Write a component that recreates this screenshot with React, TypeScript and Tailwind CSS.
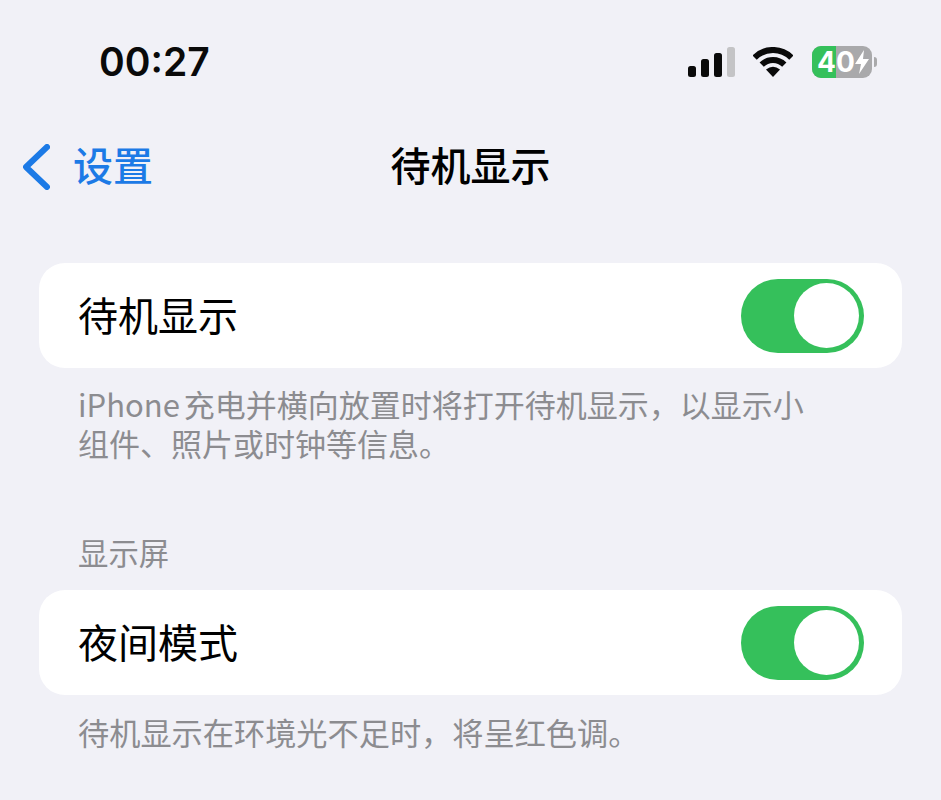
const cjk = { fontFamily: '"Noto Sans CJK SC", "Liberation Sans", sans-serif' };

function Toggle() {
  return (
    <div className="flex h-[74px] w-[123px] items-center justify-end rounded-full bg-[#35c05b] pr-[5px]">
      <div className="h-[65px] w-[65px] rounded-full bg-white" />
    </div>
  );
}

function Row({ label }: { label: string }) {
  return (
    <div className="mx-[39px] flex h-[105px] items-center justify-between rounded-[26px] bg-white pl-[39px] pr-[38px]">
      <span className="pb-[4px] text-[40px] leading-none text-black">{label}</span>
      <Toggle />
    </div>
  );
}

function StatusIcons() {
  return (
    <div className="flex items-center">
      <svg width="47" height="30" viewBox="0 0 47 30">
        <rect x="0" y="19" width="8" height="11" rx="2.5" fill="#0a0a0a" />
        <rect x="13" y="12" width="8" height="18" rx="2.5" fill="#0a0a0a" />
        <rect x="26" y="6" width="8" height="24" rx="2.5" fill="#0a0a0a" />
        <rect x="39" y="0" width="8" height="30" rx="2.5" fill="#c4c4c6" />
      </svg>
      <svg className="ml-[18px]" width="40" height="30" viewBox="0 0 40 30">
        <path d="M20 30 L13 22.5 Q20 17 27 22.5 Z" fill="#0a0a0a" />
        <path d="M8.7 17.7 A16 16 0 0 1 31.3 17.7" fill="none" stroke="#0a0a0a" strokeWidth="6" />
        <path d="M1.6 10.6 A26 26 0 0 1 38.4 10.6" fill="none" stroke="#0a0a0a" strokeWidth="6" />
      </svg>
      <div className="relative ml-[19px] flex h-[32px] w-[60px] items-center overflow-hidden rounded-[9px] bg-[#a9a9ab]">
        <div className="absolute inset-y-0 left-0 w-[24px] bg-[#35c05b]" />
        <span className="relative pl-[5px] text-[28px] font-bold leading-none text-white" style={{ fontFamily: '"Inter", sans-serif' }}>
          40
        </span>
        <svg className="relative" width="14" height="24" viewBox="0 0 14 24">
          <path d="M9 0 L0 14 H6 L4 24 L14 9 H8 Z" fill="#fff" />
        </svg>
      </div>
      <div className="ml-[2px] h-[10px] w-[3px] rounded-r-full bg-[#a9a9ab]" />
    </div>
  );
}

export default function App() {
  return (
    <div className="h-[800px] w-[941px] overflow-hidden bg-[#f1f1f7]" style={cjk}>
      {/* status bar */}
      <div className="flex h-[125px] items-start justify-between pl-[99px] pr-[64px] pt-[39px]">
        <span className="text-[39px] font-semibold leading-[46px] text-[#0a0a0a]" style={{ fontFamily: '"Inter", sans-serif' }}>
          00:27
        </span>
        <div className="pt-[7px]">
          <StatusIcons />
        </div>
      </div>

      {/* nav */}
      <div className="relative flex h-[84px] items-center justify-center">
        <div className="absolute left-[23px] top-0 flex h-full items-center text-[#1c7ae6]">
          <svg width="27" height="46" viewBox="0 0 27 46" fill="none" stroke="currentColor" strokeWidth="6" strokeLinecap="round" strokeLinejoin="round">
            <path d="M24 3 L3 23 L24 43" />
          </svg>
          <span className="ml-[23px] pb-[6px] text-[40px] font-medium leading-none">设置</span>
        </div>
        <span className="pb-[6px] text-[40px] font-medium leading-none text-black">待机显示</span>
      </div>

      <div className="pt-[54px]">
        <Row label="待机显示" />
        <p className="mx-[78px] mt-[16px] w-[740px] text-[31px] leading-[39px] text-[#8c8c90] [word-spacing:-3px]">
          iPhone 充电并横向放置时将打开待机显示，以显示小组件、照片或时钟等信息。
        </p>
        <p className="mx-[78px] mt-[71px] text-[30.4px] leading-[39px] text-[#8c8c90]">显示屏</p>
        <div className="mt-[18px]">
          <Row label="夜间模式" />
        </div>
        <p className="mx-[78px] mt-[17px] text-[31.2px] leading-[39px] text-[#8c8c90]">
          待机显示在环境光不足时，将呈红色调。
        </p>
      </div>
    </div>
  );
}
